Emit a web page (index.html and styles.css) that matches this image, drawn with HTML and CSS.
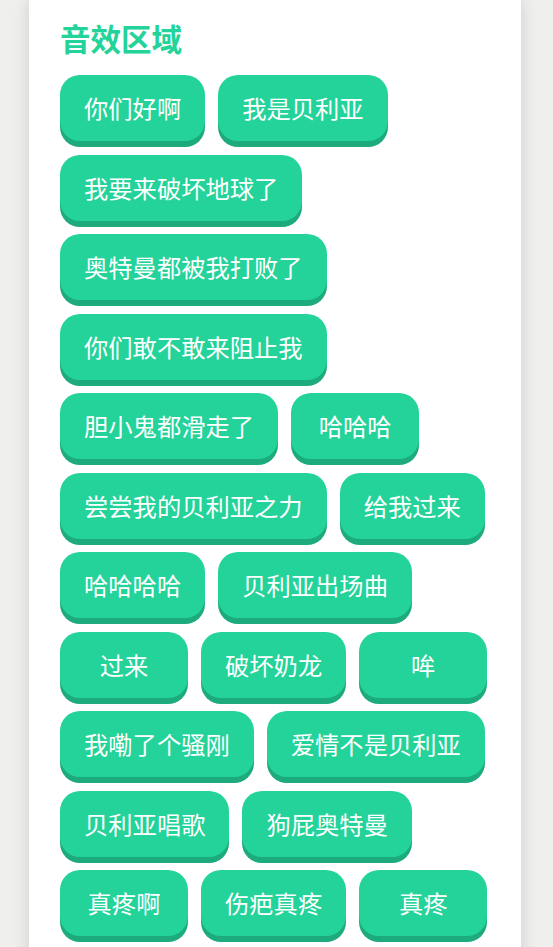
FILE: index.html
```html
<!DOCTYPE html>
<html>
<head>
  <meta charset="utf-8">
  <link rel="stylesheet" href="styles.css">
</head>

<body>
<div class="card">
  <h2 class="title">音效区域</h2>
  <div class="sounds">
    <button class="sound">你们好啊</button>
    <button class="sound">我是贝利亚</button>
    <button class="sound">我要来破坏地球了</button>
    <button class="sound">奥特曼都被我打败了</button>
    <button class="sound">你们敢不敢来阻止我</button>
    <button class="sound">胆小鬼都滑走了</button>
    <button class="sound">哈哈哈</button>
    <button class="sound">尝尝我的贝利亚之力</button>
    <button class="sound">给我过来</button>
    <button class="sound">哈哈哈哈</button>
    <button class="sound">贝利亚出场曲</button>
    <button class="sound">过来</button>
    <button class="sound">破坏奶龙</button>
    <button class="sound">哞</button>
    <button class="sound">我嘞了个骚刚</button>
    <button class="sound">爱情不是贝利亚</button>
    <button class="sound">贝利亚唱歌</button>
    <button class="sound">狗屁奥特曼</button>
    <button class="sound">真疼啊</button>
    <button class="sound">伤疤真疼</button>
    <button class="sound">真疼</button>
  </div>
</div>
</body>

</html>
```

FILE: styles.css
```css
body {
  margin: 0;
  background-color: #eff0ee;
  font-family: "Noto Sans CJK SC", "Noto Sans", sans-serif;
}
.card {
  width: 492px;
  min-height: 1000px;
  margin-left: 29px;
  padding: 20px 31px;
  box-sizing: border-box;
  background-color: #fff;
  box-shadow: 0 0 16px rgba(0, 0, 0, .14);
}
.title {
  margin: 0 0 19px 0;
  font-size: 30.5px;
  line-height: 36px;
  font-weight: bold;
  color: #23d399;
}
.sounds {
  display: flex;
  flex-wrap: wrap;
  gap: 13.5px 13px;
}
.sound {
  height: 66px;
  min-width: 128px;
  padding: 0 24px;
  box-sizing: border-box;
  border: none;
  border-radius: 20px;
  background-color: #23d399;
  box-shadow: 0 6px 0 #1daa7d;
  color: #fff;
  font-family: inherit;
  font-size: 24.3px;
  line-height: 66px;
  cursor: pointer;
}
```
